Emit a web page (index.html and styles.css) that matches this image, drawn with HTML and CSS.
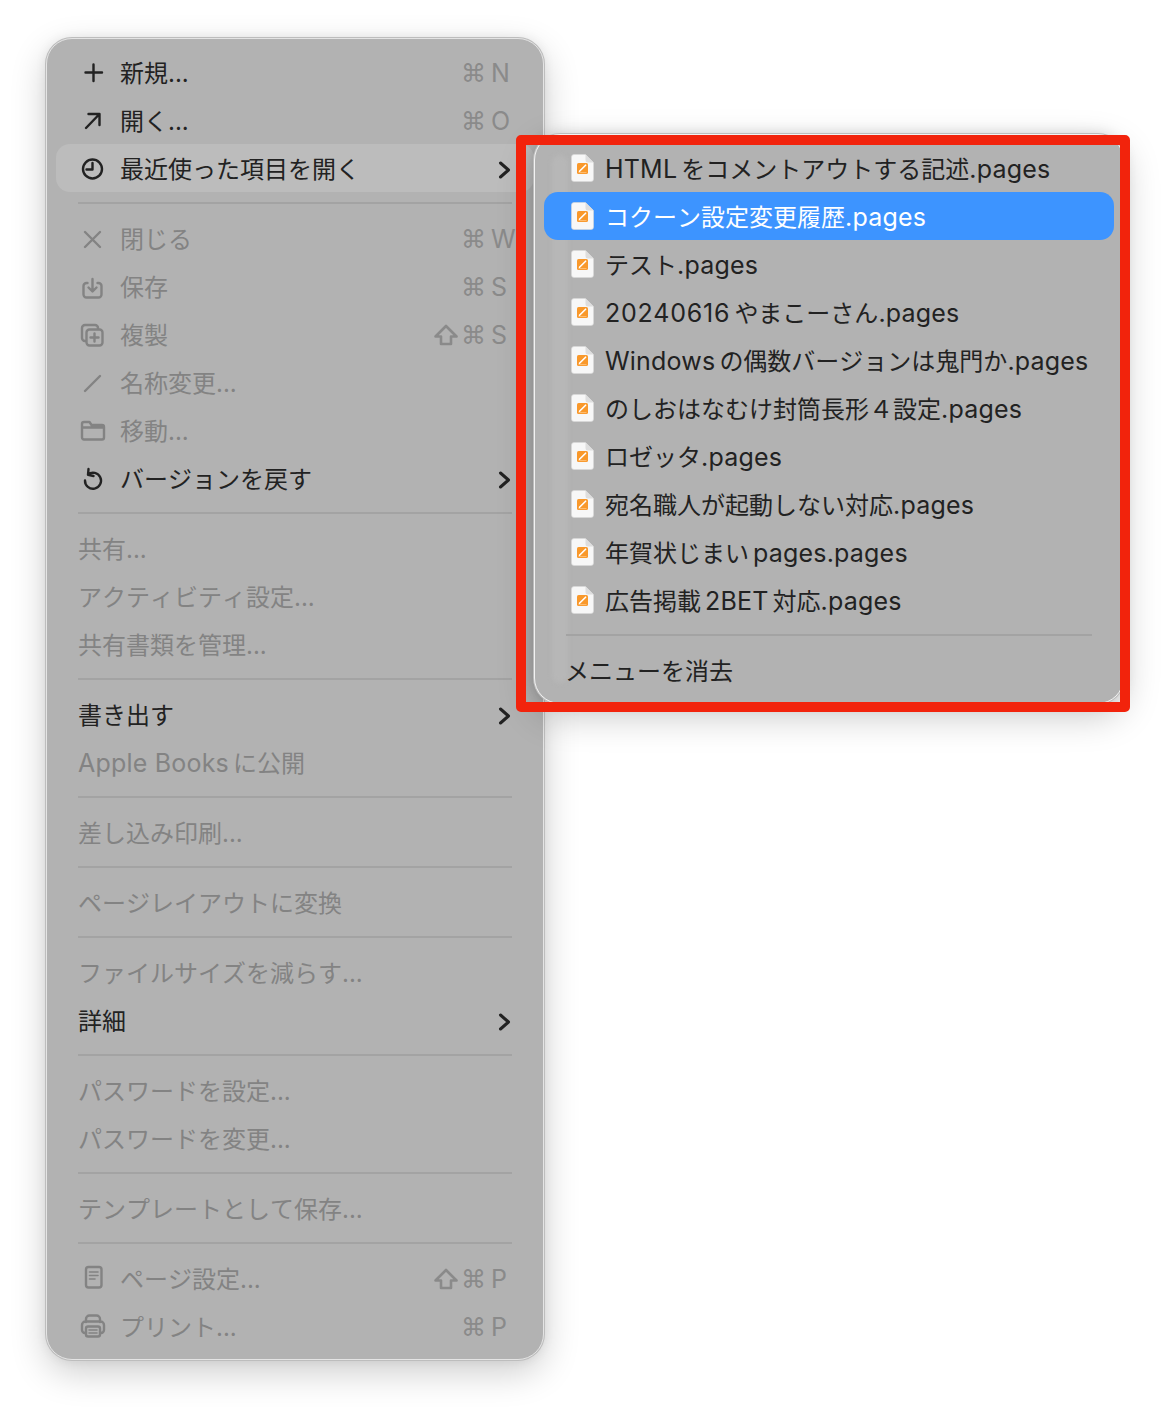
FILE: index.html
```html
<!DOCTYPE html>
<html lang="ja">
<head>
<meta charset="utf-8">
<title>メニュー</title>
<link rel="stylesheet" href="styles.css">
</head>
<body>
<svg class="defs" width="0" height="0" aria-hidden="true">
  <symbol id="doc" viewBox="0 0 23 28">
    <path d="M3 0.5H14.5L22.5 8.5V25a2.5 2.5 0 0 1-2.5 2.5H3A2.5 2.5 0 0 1 .5 25V3A2.5 2.5 0 0 1 3 .5Z" fill="#f7f7f7" stroke="#d8d8d8" stroke-width=".6"/>
    <path d="M14.5 .5V6a2.5 2.5 0 0 0 2.5 2.5h5.5Z" fill="#dedede"/>
    <rect x="6" y="9" width="11" height="11" rx="1.6" fill="#f9982a"/>
    <path d="M8.5 17.2 14.6 11.2" stroke="#fff" stroke-width="1.6" stroke-linecap="round"/>
    <path d="M7.5 18.6H15.5" stroke="#ffc98a" stroke-width=".8"/>
  </symbol>
  <symbol id="chev" viewBox="0 0 14 18">
    <path d="M2.500 2 10.500 9 2.500 16" fill="none" stroke="currentColor" stroke-width="3" stroke-linecap="round" stroke-linejoin="round"/>
  </symbol>
  <symbol id="shift" viewBox="0 0 24 22">
    <path d="M12 2 22.500 12.500H17V20H7V12.500H1.500Z" fill="none" stroke="currentColor" stroke-width="2.600" stroke-linejoin="round"/>
  </symbol>
</svg>

<div class="stage">
  <nav class="menu">
    <div class="row"><svg class="ico" viewBox="0 0 30 30"><path class="s" d="M15.500 7.500V24M7.500 15.500H24"/></svg><span class="tx">新規...</span><span class="keys"><span class="cmd">⌘</span><span class="letter">N</span></span></div>
    <div class="row"><svg class="ico" viewBox="0 0 30 30"><path class="s" d="M8 23 21.500 9M10.500 9H21.500V20"/></svg><span class="tx">開く...</span><span class="keys"><span class="cmd">⌘</span><span class="letter">O</span></span></div>
    <div class="row hover"><svg class="ico" viewBox="0 0 30 30"><circle class="s" cx="14.500" cy="16" r="9.500"/><path class="s" d="M14.500 10V16.500H8.500"/></svg><span class="tx">最近使った項目を開く</span><svg class="chev"><use href="#chev"/></svg></div>
    <div class="sep"></div>
    <div class="row off"><svg class="ico" viewBox="0 0 30 30"><path class="s" d="M7 9 22 24M22 9 7 24"/></svg><span class="tx">閉じる</span><span class="keys"><span class="cmd">⌘</span><span class="letter">W</span></span></div>
    <div class="row off"><svg class="ico" viewBox="0 0 30 30"><path class="s" d="M9.500 12H8.500a3 3 0 0 0-3 3v8.500a3 3 0 0 0 3 3h12a3 3 0 0 0 3-3V15a3 3 0 0 0-3-3h-1M14.500 8V20M10.500 16.500l4 4 4-4"/></svg><span class="tx">保存</span><span class="keys"><span class="cmd">⌘</span><span class="letter">S</span></span></div>
    <div class="row off"><svg class="ico" viewBox="0 0 30 30"><path class="s" d="M8 22H7a3 3 0 0 1-3-3V9a3 3 0 0 1 3-3h10a3 3 0 0 1 3 3v1"/><rect class="s" x="8.500" y="10.500" width="16" height="16" rx="3"/><path class="s" d="M16.500 14.500V22.500M12.500 18.500H20.500"/></svg><span class="tx">複製</span><span class="keys"><span class="shift"><svg class="shift-ico"><use href="#shift"/></svg></span><span class="cmd">⌘</span><span class="letter">S</span></span></div>
    <div class="row off"><svg class="ico" viewBox="0 0 30 30"><path class="s" d="M7 24 22 9"/></svg><span class="tx">名称変更...</span></div>
    <div class="row off"><svg class="ico" viewBox="0 0 30 30"><path class="s" d="M4 9A2 2 0 0 1 6 7h5.500l2 3H24a2 2 0 0 1 2 2v10.500a2 2 0 0 1-2 2H6a2 2 0 0 1-2-2ZM4 12.500H26"/></svg><span class="tx">移動...</span></div>
    <div class="row"><svg class="ico" viewBox="0 0 30 30"><path class="s" d="M10 11.500A8 8 0 1 1 7 17.500M10.500 6 10 11.800 15.500 13"/></svg><span class="tx">バージョンを戻す</span><svg class="chev"><use href="#chev"/></svg></div>
    <div class="sep"></div>
    <div class="row off"><span class="tx">共有...</span></div>
    <div class="row off"><span class="tx">アクティビティ設定...</span></div>
    <div class="row off"><span class="tx">共有書類を管理...</span></div>
    <div class="sep"></div>
    <div class="row"><span class="tx">書き出す</span><svg class="chev"><use href="#chev"/></svg></div>
    <div class="row off"><span class="tx"><span class="la gr">Apple Books</span>に公開</span></div>
    <div class="sep"></div>
    <div class="row off"><span class="tx">差し込み印刷...</span></div>
    <div class="sep"></div>
    <div class="row off"><span class="tx">ページレイアウトに変換</span></div>
    <div class="sep"></div>
    <div class="row off"><span class="tx">ファイルサイズを減らす...</span></div>
    <div class="row"><span class="tx">詳細</span><svg class="chev"><use href="#chev"/></svg></div>
    <div class="sep"></div>
    <div class="row off"><span class="tx">パスワードを設定...</span></div>
    <div class="row off"><span class="tx">パスワードを変更...</span></div>
    <div class="sep"></div>
    <div class="row off"><span class="tx">テンプレートとして保存...</span></div>
    <div class="sep"></div>
    <div class="row off"><svg class="ico" viewBox="0 0 30 30"><rect class="s" x="8" y="4" width="15.500" height="20.500" rx="2.500"/><path class="t" d="M11.500 9H20M11.500 12.500H20M11.500 16H17"/></svg><span class="tx">ページ設定...</span><span class="keys"><span class="shift"><svg class="shift-ico"><use href="#shift"/></svg></span><span class="cmd">⌘</span><span class="letter">P</span></span></div>
    <div class="row off"><svg class="ico" viewBox="0 0 30 30"><path class="s" d="M8 11V8a3.500 3.500 0 0 1 3.500-3.500h7A3.500 3.500 0 0 1 22 8v3M8 22H7a3 3 0 0 1-3-3v-5a3.500 3.500 0 0 1 3.500-3.500h15A3.500 3.500 0 0 1 26 14v5a3 3 0 0 1-3 3h-1"/><rect class="s" x="8" y="15.500" width="14" height="10" rx="2"/><path class="t" d="M11 19H19M11 22H19"/></svg><span class="tx">プリント...</span><span class="keys"><span class="cmd">⌘</span><span class="letter">P</span></span></div>
  </nav>

  <div class="submenu">
    <div class="ghost"></div>
    <div class="subrow"><svg class="doc"><use href="#doc"/></svg><span class="tx"><span class="la gr">HTML</span>をコメントアウトする記述<span class="la">.pages</span></span></div>
    <div class="subrow sel"><svg class="doc"><use href="#doc"/></svg><span class="tx">コクーン設定変更履歴<span class="la">.pages</span></span></div>
    <div class="subrow"><svg class="doc"><use href="#doc"/></svg><span class="tx">テスト<span class="la">.pages</span></span></div>
    <div class="subrow"><svg class="doc"><use href="#doc"/></svg><span class="tx"><span class="la gr num">20240616</span>やまこーさん<span class="la">.pages</span></span></div>
    <div class="subrow"><svg class="doc"><use href="#doc"/></svg><span class="tx"><span class="la gr">Windows</span>の偶数バージョンは鬼門か<span class="la">.pages</span></span></div>
    <div class="subrow"><svg class="doc"><use href="#doc"/></svg><span class="tx">のしおはなむけ封筒長形４設定<span class="la">.pages</span></span></div>
    <div class="subrow"><svg class="doc"><use href="#doc"/></svg><span class="tx">ロゼッタ<span class="la">.pages</span></span></div>
    <div class="subrow"><svg class="doc"><use href="#doc"/></svg><span class="tx">宛名職人が起動しない対応<span class="la">.pages</span></span></div>
    <div class="subrow"><svg class="doc"><use href="#doc"/></svg><span class="tx">年賀状じまい<span class="la gl">pages.pages</span></span></div>
    <div class="subrow"><svg class="doc"><use href="#doc"/></svg><span class="tx">広告掲載<span class="la gl gr">2BET</span>対応<span class="la">.pages</span></span></div>
    <div class="subsep"></div>
    <div class="subrow clear"><span class="tx">メニューを消去</span></div>
  </div>

  <div class="redbox"></div>
</div>
</body>
</html>
```

FILE: styles.css
```css
* { box-sizing: border-box; }

html, body {
  margin: 0;
  padding: 0;
  background: #fff;
  overflow: hidden;
}

body {
  width: 1170px;
  height: 1414px;
  font-family: "Inter", "Noto Sans CJK JP", sans-serif;
  font-size: 24px;
  font-kerning: none;
  color: #222;
}

.defs { position: absolute; }

.stage {
  position: relative;
  width: 1170px;
  height: 1414px;
  padding: 38px 0 0 46px;
}

.menu {
  width: 498px;
  height: 1322px;
  padding: 9px;
  background: #b2b2b2;
  border: 1px solid #e4e4e4;
  border-radius: 26px;
  box-shadow: 0 0 0 1px #bdbdbd, 0 12px 36px rgba(0, 0, 0, .2), 0 0 12px rgba(0, 0, 0, .08);
}

.row {
  display: flex;
  align-items: center;
  height: 48px;
  padding: 0 21px 0 22px;
  border-radius: 14px;
  white-space: nowrap;
}

.row.hover { background: #bcbcbc; }
.row.off { color: #838383; }

.tx { margin-top: -2px; }

.la { font-size: 25px; font-kerning: normal; letter-spacing: .2px; }
.num { letter-spacing: .8px; }
.gr { margin-right: 4px; }
.gl { margin-left: 4px; }

.ico {
  flex: none;
  width: 30px;
  height: 30px;
  margin-right: 12px;
}

.s, .t {
  fill: none;
  stroke: currentColor;
  stroke-linecap: round;
  stroke-linejoin: round;
}
.s { stroke-width: 2.4; }
.t { stroke-width: 1.6; }

.chev {
  flex: none;
  width: 14px;
  height: 18px;
  margin: 3px 1px 0 auto;
  color: #222;
}

.keys {
  display: flex;
  align-items: center;
  margin: 2px 2px 0 auto;
  color: #8a8a8a;
}

.cmd {
  width: 30px;
  font-family: "DejaVu Sans", sans-serif;
  font-size: 25px;
  line-height: 1;
}

.shift {
  display: flex;
  width: 27px;
}

.shift-ico {
  width: 24px;
  height: 22px;
}

.letter {
  width: 20px;
  font-size: 25px;
  font-kerning: normal;
}

.sep {
  height: 2px;
  margin: 10px 22px;
  background: #a3a3a3;
}

.submenu {
  position: absolute;
  left: 534px;
  top: 134px;
  width: 590px;
  height: 570px;
  padding: 9px;
  background: #b2b2b2;
  border: 1px solid #f2f2f2;
  border-radius: 26px;
  box-shadow: 0 0 0 1px #bdbdbd, 0 12px 36px rgba(0, 0, 0, .22), 0 0 14px rgba(0, 0, 0, .14);
}

.ghost {
  position: absolute;
  left: 17px;
  top: 20px;
  width: 16px;
  height: 528px;
  border-radius: 8px;
  background: #b7b7b7;
  filter: blur(2px);
}

.subrow {
  position: relative;
  display: flex;
  align-items: center;
  height: 48px;
  padding-left: 27px;
  border-radius: 14px;
  white-space: nowrap;
}

.subrow.sel {
  background: #3d94ff;
  color: #fff;
}

.subrow.clear { padding-left: 21px; }

.doc {
  flex: none;
  width: 23px;
  height: 28px;
  margin-right: 11px;
}

.subsep {
  position: relative;
  height: 2px;
  margin: 10px 22px;
  background: #a3a3a3;
}

.redbox {
  position: absolute;
  left: 516px;
  top: 135px;
  width: 614px;
  height: 577px;
  border: 10px solid #f2230c;
  border-radius: 5px;
}
```
